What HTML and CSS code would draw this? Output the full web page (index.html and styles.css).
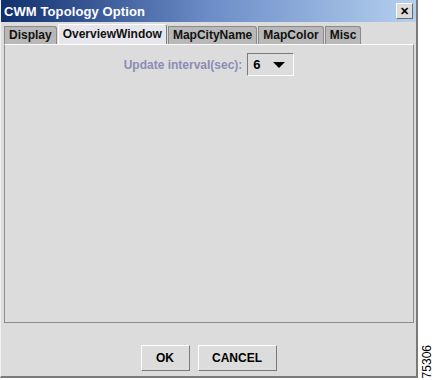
FILE: index.html
```html
<!DOCTYPE html>
<html lang="en">
<head>
  <meta charset="UTF-8">
  <title>CWM Topology Option</title>
  <link rel="stylesheet" href="styles.css">
</head>
<body>
  <div class="page">
    <div class="dialog">
      <div class="titlebar">
        <span class="title">CWM Topology Option</span>
        <span class="close">&#x2715;</span>
      </div>

      <div class="tabs">
        <div class="tab">Display</div>
        <div class="tab active">OverviewWindow</div>
        <div class="tab">MapCityName</div>
        <div class="tab">MapColor</div>
        <div class="tab">Misc</div>
      </div>

      <div class="panel">
        <div class="row">
          <label>Update interval(sec):</label>
          <div class="select">
            <span>6</span>
            <span class="arrow"></span>
          </div>
        </div>
      </div>

      <div class="buttons">
        <button class="ok">OK</button>
        <button class="cancel">CANCEL</button>
      </div>
    </div>
    <div class="figno">75306</div>
  </div>
</body>
</html>
```

FILE: styles.css
```css
body {
  margin: 0;
  background: #fff;
  font-family: "Liberation Sans", Arial, sans-serif;
  font-size: 12px;
  font-weight: bold;
}
.page {
  display: flex;
  width: 434px;
  height: 380px;
}
.dialog {
  width: 416px;
  height: 376px;
  background: #dcdcdc;
  border-left: 1px solid #f0f0f0;
  border-right: 2px solid #7a7a7a;
  border-bottom: 2px solid #7a7a7a;
  display: flex;
  flex-direction: column;
}
.titlebar {
  height: 22px;
  background: linear-gradient(to right, #10306e, #6c8cc8 50%, #b4d0ee);
  display: flex;
  align-items: center;
  justify-content: space-between;
  padding: 0 3px 0 3px;
}
.title {
  color: #fff;
  font-size: 13px;
  letter-spacing: 0.1px;
}
.close {
  width: 15px;
  height: 14px;
  background: #dcdcdc;
  border: 1px solid;
  border-color: #fff #6a6a6a #6a6a6a #fff;
  font-size: 11px;
  line-height: 14px;
  text-align: center;
  color: #000;
}
.tabs {
  display: flex;
  align-items: flex-end;
  padding: 3px 0 0 3px;
  height: 19px;
}
.tab {
  background: #b8b8b8;
  border: 1px solid #8a8a8a;
  border-bottom: none;
  border-top-right-radius: 3px;
  padding: 0 4px;
  height: 17px;
  line-height: 17px;
  margin-right: 1px;
  color: #111;
}
.tab.active {
  background: #e6e6ec;
  height: 19px;
  line-height: 19px;
  border-color: #fff #7a7a7a #7a7a7a #fff;
}
.panel {
  margin: 0 2px 0 3px;
  height: 277px;
  border: 1px solid #8c8c8c;
  border-top-color: #fff;
  display: flex;
  flex-direction: column;
  align-items: center;
}
.row {
  display: flex;
  align-items: center;
  gap: 5px;
  margin-top: 8px;
}
label {
  color: #8c8cb4;
}
.select {
  border: 1px solid;
  border-color: #7a7a7a #fff #fff #7a7a7a;
  display: flex;
  align-items: center;
  justify-content: space-between;
  padding: 0 8px 0 5px;
  box-sizing: border-box;
  width: 47px;
  height: 23px;
  font-size: 13px;
}
.arrow {
  width: 0;
  height: 0;
  border-left: 6px solid transparent;
  border-right: 6px solid transparent;
  border-top: 6px solid #000;
}
.buttons {
  display: flex;
  justify-content: center;
  gap: 8px;
  margin-top: 22px;
}
button {
  font-family: inherit;
  font-size: 12px;
  font-weight: bold;
  background: #dcdcdc;
  border: 1px solid;
  border-color: #fff #7a7a7a #7a7a7a #fff;
  height: 26px;
  padding: 0;
  color: #000;
}
.ok {
  width: 49px;
}
.cancel {
  width: 79px;
}
.figno {
  writing-mode: vertical-rl;
  transform: rotate(180deg);
  align-self: flex-end;
  font-weight: normal;
  font-size: 12px;
  margin-left: 2px;
  margin-bottom: 2px;
  color: #000;
}
```
